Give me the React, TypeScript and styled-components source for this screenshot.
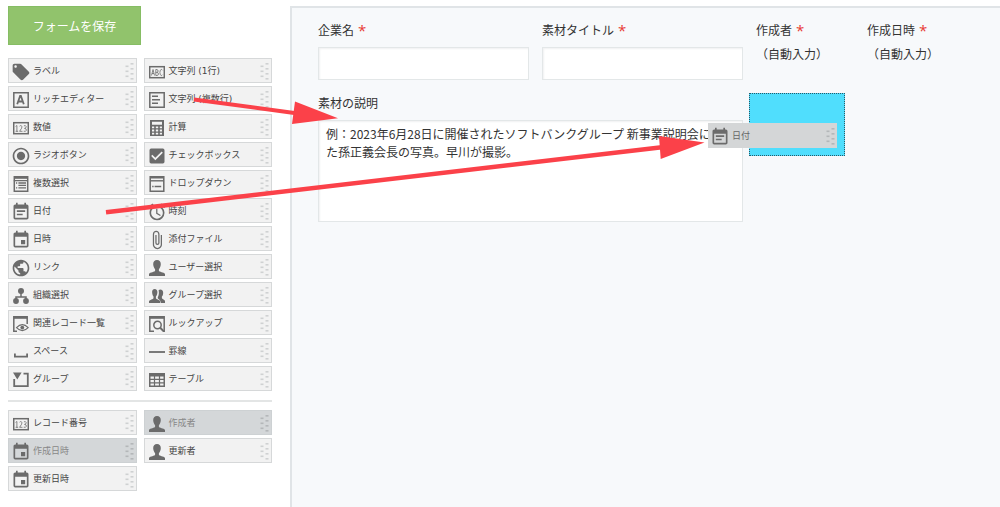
import React from "react";
import styled, { createGlobalStyle, css } from "styled-components";
import {
  MdLocalOffer, MdRadioButtonChecked, MdCheckBox, MdEventNote, MdEvent,
  MdAccessAlarm, MdAttachFile, MdPublic,
} from "react-icons/md";

const GlobalStyle = createGlobalStyle`
  * { box-sizing: border-box; }
  body {
    margin: 0;
    background: #fff;
    color: #333;
    font-family: "Noto Sans CJK JP", sans-serif;
    font-size: 12px;
  }
`;

const Page = styled.div`
  position: relative;
  display: flex;
  min-height: 100vh;
  padding-top: 6px;
`;

const Sidebar = styled.aside`
  flex: none;
  width: 290px;
  padding: 0 18px 16px 8px;
`;

const SaveButton = styled.button`
  display: block;
  width: 133px;
  height: 39px;
  border: 1px solid #86bd64;
  background: #91c36c;
  color: #fff;
  font: inherit;
  cursor: pointer;
`;

const Palette = styled.div`
  display: grid;
  grid-template-columns: 1fr 1fr;
  gap: 3px 7px;
`;

const FieldPalette = styled(Palette)`
  margin-top: 13px;
  padding-bottom: 9px;
  border-bottom: 2px solid #e3e5e5;
`;

const RecordPalette = styled(Palette)`
  margin-top: 8px;
`;

const chipBox = css`
  display: flex;
  align-items: center;
  gap: 4px;
  height: 25px;
  padding: 0 2px 0 4px;
  font-family: "DejaVu Sans", "Noto Sans CJK JP", sans-serif;
  font-size: 9px;
  line-height: 12px;
  text-align: left;
  white-space: nowrap;
`;

const ChipButton = styled.button`
  ${chipBox}
  border: 1px solid #d6d8d9;
  background: #f2f2f2;
  color: #444;
  cursor: move;
  &:disabled {
    background: #d4d7d9;
    border-color: #cdd1d3;
    color: #888;
    cursor: default;
  }
`;

const ChipLabel = styled.span`
  flex: 1;
`;

const ChipIcon = styled.svg`
  flex: none;
  width: 16px;
  height: 16px;
  margin-top: 2px;
  color: #6b6b6b;
  fill: none;
  stroke: currentColor;
  stroke-width: 1.5;
`;

const PackageIcon = styled.span`
  flex: none;
  display: flex;
  width: 16px;
  height: 16px;
  margin-top: 2px;
  color: #6b6b6b;
  svg { width: 20px; height: 20px; margin: -2px; flex: none; }
`;

const GripIcon = styled.svg<{ $dark?: boolean }>`
  flex: none;
  width: 9px;
  height: 18px;
  fill: ${(p) => (p.$dark ? "#b4b7b9" : "#cfd1d2")};
`;

const Grip = ({ dark }: { dark?: boolean }) => (
  <GripIcon $dark={dark} viewBox="0 0 9 18" aria-hidden="true">
    {[1, 6, 11, 16].map((y) => <rect key={y} x="5.5" y={y} width="3" height="1.6" />)}
    {[3.5, 8.5, 13.5].map((y) => <rect key={y} x="0.5" y={y} width="3" height="1.6" />)}
  </GripIcon>
);

const Solid = ({ d }: { d: string }) => <path d={d} fill="currentColor" stroke="none" />;

const personPath =
  "M8 0C5.5 0 4.1 1.7 4.2 4.3C4.3 6.5 5.1 8.1 6.1 9.2V10.8C5.9 12 1.2 12.2 0 14V16H16V14C14.8 12.2 10.1 12 9.9 10.8V9.2C10.9 8.1 11.7 6.5 11.8 4.3C11.9 1.7 10.5 0 8 0Z";

const drawings: Record<string, React.ReactNode> = {
  abc: (
    <>
      <rect x="0.7" y="2.7" width="14.6" height="11" />
      <path strokeWidth="0.8" d="M2.5 11.5L4 5.5L5.5 11.5M3 9.5H5M6.8 5.5V11.5H8.2Q9.4 11.4 9.4 10T8.2 8.4H6.8M8 8.4Q9.1 8.2 9.1 7T8 5.5H6.8M13.6 6.3Q13 5.4 12.2 5.5Q10.9 5.8 10.9 8.5T12.2 11.5Q13 11.6 13.6 10.7" />
    </>
  ),
  num: (
    <>
      <rect x="0.7" y="2.7" width="14.6" height="11" />
      <path strokeWidth="0.8" d="M2.6 6.4L3.9 5.5V11.5M2.6 11.3H5.2M6.6 6.2Q7.4 5.3 8.3 5.7Q9.4 6.6 8.6 8.2L6.6 11.3H9.5M10.9 5.8Q12.8 5.1 13.2 6.6Q13.3 8.2 11.5 8.4Q13.6 8.5 13.4 10.2Q12.9 11.9 10.7 11.2" />
    </>
  ),
  rich: (
    <>
      <path d="M0.8 0.8H15.2V15.2H0.8Z" />
      <path strokeWidth="1.8" d="M4.2 12.3L7.1 4H7.9L10.8 12.3M5.3 9.5H9.8" />
    </>
  ),
  multi: (
    <>
      <path d="M0.8 0.8H15.2V15.2H0.8Z" />
      <path d="M3 4.3H9M3 7.8H11M3 11.3H9" />
    </>
  ),
  calc: (
    <Solid d="M1 0H15V16H1ZM3 1.7V4.7H13V1.7ZM3 6.4V8.2H5.2V6.4ZM6.8 6.4V8.2H9.2V6.4ZM10.8 6.4V8.2H13V6.4ZM3 9.6V11.4H5.2V9.6ZM6.8 9.6V11.4H9.2V9.6ZM10.8 9.6V11.4H13V9.6ZM3 12.7V14.4H5.2V12.7ZM6.8 12.7V14.4H9.2V12.7ZM10.8 12.7V14.4H13V12.7Z" />
  ),
  list: (
    <>
      <path d="M1.3 0.8H14.7V15.2H1.3Z" />
      <path strokeWidth="2" d="M1.3 1.8H14.7" />
      <path strokeWidth="1.3" d="M0.8 4.6H15M3 7H4.2M5.4 7H13M5.4 9.4H13M3 11.8H4.2M5.4 11.8H13" />
    </>
  ),
  drop: (
    <>
      <path d="M1.2 0.8H14.8V15.2H1.2Z" />
      <path strokeWidth="1.8" d="M1.2 1.6H14.8" />
      <path strokeWidth="1.4" d="M1.2 4.8H14.8" />
      <path d="M3.2 10.6H4.6M5.6 10.6H12.2" />
    </>
  ),
  person: <Solid d={personPath} />,
  people: (
    <>
      <Solid d="M11.5 1.5C10.7 1.5 10 1.8 9.6 2.3C10.3 5 9.8 7.5 8.8 9.2V10.3C9.2 11.3 11.6 11.9 11.9 15H16V12.8C15.2 11.4 13 11 12.9 10V8.6C14 7.4 14.3 5.8 14.1 4C13.9 2.4 12.9 1.5 11.5 1.5Z" />
      <Solid d="M5.7 1C3.9 1 3 2.3 3.1 4.2C3.2 6 3.7 7.5 4.5 8.4V10.2C4.3 11.2 0.6 11.6 0 13.3V15H11.2V13.3C10.6 11.6 7.1 11.2 6.9 10.2V8.4C7.8 7.5 8.3 6 8.4 4.2C8.5 2.3 7.5 1 5.7 1Z" />
    </>
  ),
  org: (
    <>
      <g fill="currentColor" stroke="none">
        <circle cx="8" cy="3" r="3" /><circle cx="3" cy="13" r="2.9" /><circle cx="13" cy="13" r="2.9" />
      </g>
      <path d="M8 5V9M3 12V9H13V12" />
    </>
  ),
  related: (
    <>
      <path d="M4 15.2H0.8V0.8H14.2V8" />
      <path strokeWidth="2" d="M0.8 1.8H14.2" />
      <path strokeWidth="1.1" d="M3.5 11.6Q9.3 5.6 15.2 11.6Q9.3 17.6 3.5 11.6Z" />
      <circle cx="9.3" cy="11.6" r="1.9" fill="currentColor" stroke="none" />
    </>
  ),
  lookup: (
    <>
      <path d="M5 15.2H0.8V0.8H15.2V15.2H14" />
      <path strokeWidth="2" d="M0.8 1.8H15.2" />
      <circle cx="8.5" cy="9" r="3.7" />
      <path strokeWidth="2" d="M11 11.5L15 15.6" />
    </>
  ),
  space: <path strokeWidth="1.8" d="M1.9 9.5V12.6H14.1V9.5" />,
  rule: <path strokeWidth="1.8" d="M0 8H16" />,
  group: (
    <>
      <path strokeWidth="1.8" d="M1.2 7V14.2H5M11.5 14.2H14.8V1.6H10.5M4 14.2H12" />
      <Solid d="M0 0.4H8.6L4.3 7.4Z" />
    </>
  ),
  table: (
    <Solid d="M0 1H16V15H0ZM1.5 4.6V6.8H4.9V4.6ZM6.1 4.6V6.8H9.9V4.6ZM11.1 4.6V6.8H14.5V4.6ZM1.5 8V10.2H4.9V8ZM6.1 8V10.2H9.9V8ZM11.1 8V10.2H14.5V8ZM1.5 11.4V13.6H4.9V11.4ZM6.1 11.4V13.6H9.9V11.4ZM11.1 11.4V13.6H14.5V11.4Z" />
  ),
};

const packaged: Record<string, React.ComponentType> = {
  tag: MdLocalOffer,
  radio: MdRadioButtonChecked,
  check: MdCheckBox,
  date: MdEventNote,
  datetime: MdEvent,
  time: MdAccessAlarm,
  attach: MdAttachFile,
  link: MdPublic,
};

const Icon = ({ name }: { name: string }) => {
  const Packaged = packaged[name];
  if (Packaged) return <PackageIcon aria-hidden="true"><Packaged /></PackageIcon>;
  return (
    <ChipIcon viewBox="0 0 16 16" fillRule="evenodd" aria-hidden="true">
      {drawings[name]}
    </ChipIcon>
  );
};

const ChipContent = ({ icon, label, dark }: { icon: string; label: string; dark?: boolean }) => (
  <>
    <Icon name={icon} />
    <ChipLabel>{label}</ChipLabel>
    <Grip dark={dark} />
  </>
);

const fieldChips: [string, string][] = [
  ["tag", "ラベル"], ["abc", "文字列 (1行)"],
  ["rich", "リッチエディター"], ["multi", "文字列 (複数行)"],
  ["num", "数値"], ["calc", "計算"],
  ["radio", "ラジオボタン"], ["check", "チェックボックス"],
  ["list", "複数選択"], ["drop", "ドロップダウン"],
  ["date", "日付"], ["time", "時刻"],
  ["datetime", "日時"], ["attach", "添付ファイル"],
  ["link", "リンク"], ["person", "ユーザー選択"],
  ["org", "組織選択"], ["people", "グループ選択"],
  ["related", "関連レコード一覧"], ["lookup", "ルックアップ"],
  ["space", "スペース"], ["rule", "罫線"],
  ["group", "グループ"], ["table", "テーブル"],
];

const recordChips: [string, string, boolean][] = [
  ["num", "レコード番号", false], ["person", "作成者", true],
  ["datetime", "作成日時", true], ["person", "更新者", false],
  ["datetime", "更新日時", false],
];

const Canvas = styled.main`
  flex: 1;
  min-width: 0;
  padding: 13px 0 0 26px;
  border-top: 2px solid #e0e4e7;
  border-left: 2px solid #e0e4e7;
  background: #f7f9fb;
`;

const FormRow = styled.div`
  display: flex;
  align-items: flex-start;
  gap: 13px;
`;

const LowerRow = styled(FormRow)`
  gap: 6px;
  margin-top: 13px;
`;

const Field = styled.div<{ $width: number }>`
  display: flex;
  flex-direction: column;
  gap: 8px;
  width: ${(p) => p.$width}px;
`;

const DescriptionField = styled(Field)`
  padding-top: 1px;
`;

const Label = styled.label`
  display: flex;
  gap: 4px;
  height: 18px;
  line-height: 18px;
  white-space: nowrap;
`;

const Required = styled.span`
  color: #e83a34;
  font-family: "Open Sans", sans-serif;
  font-size: 15px;
`;

const inputBox = css`
  width: 100%;
  border: 1px solid #e3e7e8;
  border-radius: 0;
  background: #fff;
  box-shadow: inset 1px 1px 2px #f0f1f2;
  color: #333;
  font: inherit;
  outline: none;
`;

const TextInput = styled.input`
  ${inputBox}
  height: 33px;
  padding: 0 8px;
`;

const TextArea = styled.textarea`
  ${inputBox}
  display: block;
  height: 102px;
  padding: 4px 7px;
  line-height: 18px;
  white-space: pre;
  overflow: hidden;
  resize: none;
`;

const AutoValue = styled.output`
  line-height: 14px;
  white-space: nowrap;
`;

const DropZone = styled.div`
  position: relative;
  width: 96px;
  height: 63px;
  border: 1px dotted #28596a;
  background: #50defd;
`;

const DraggedChip = styled.div`
  ${chipBox}
  position: absolute;
  top: 29px;
  left: -42px;
  width: 129px;
  background: #d4d6d7;
  color: #666;
`;

const Arrows = styled.svg`
  position: absolute;
  top: 0;
  left: 0;
  width: 720px;
  height: 230px;
  pointer-events: none;
`;

export default function App() {
  return (
    <>
      <GlobalStyle />
      <Page>
        <Sidebar>
          <SaveButton type="button">フォームを保存</SaveButton>
          <FieldPalette>
            {fieldChips.map(([icon, label]) => (
              <ChipButton type="button" key={label}><ChipContent icon={icon} label={label} /></ChipButton>
            ))}
          </FieldPalette>
          <RecordPalette>
            {recordChips.map(([icon, label, used]) => (
              <ChipButton type="button" key={label} disabled={used}>
                <ChipContent icon={icon} label={label} dark={used} />
              </ChipButton>
            ))}
          </RecordPalette>
        </Sidebar>
        <Canvas>
          <FormRow>
            <Field $width={211}>
              <Label htmlFor="company">企業名<Required>*</Required></Label>
              <TextInput id="company" />
            </Field>
            <Field $width={201}>
              <Label htmlFor="title">素材タイトル<Required>*</Required></Label>
              <TextInput id="title" />
            </Field>
            <Field $width={98}>
              <Label htmlFor="creator">作成者<Required>*</Required></Label>
              <AutoValue id="creator">（自動入力）</AutoValue>
            </Field>
            <Field $width={98}>
              <Label htmlFor="created">作成日時<Required>*</Required></Label>
              <AutoValue id="created">（自動入力）</AutoValue>
            </Field>
          </FormRow>
          <LowerRow>
            <DescriptionField $width={425}>
              <Label htmlFor="description">素材の説明</Label>
              <TextArea
                id="description"
                defaultValue={"例：2023年6月28日に開催されたソフトバンクグループ 新事業説明会に登\nた孫正義会長の写真。早川が撮影。"}
              />
            </DescriptionField>
            <DropZone>
              <DraggedChip><ChipContent icon="date" label="日付" dark /></DraggedChip>
            </DropZone>
          </LowerRow>
        </Canvas>
        <Arrows viewBox="0 0 720 230" aria-hidden="true">
          <g stroke="#fb4149" fill="none">
            <path strokeWidth="4" d="M194 99.5L298 113.5" />
            <path strokeWidth="4.5" d="M106 212.3L664 147" />
          </g>
          <path fill="#fb4149" d="M295 101.5L338 118.3L292 124ZM659 136L704.5 142.5L660.7 159Z" />
        </Arrows>
      </Page>
    </>
  );
}
